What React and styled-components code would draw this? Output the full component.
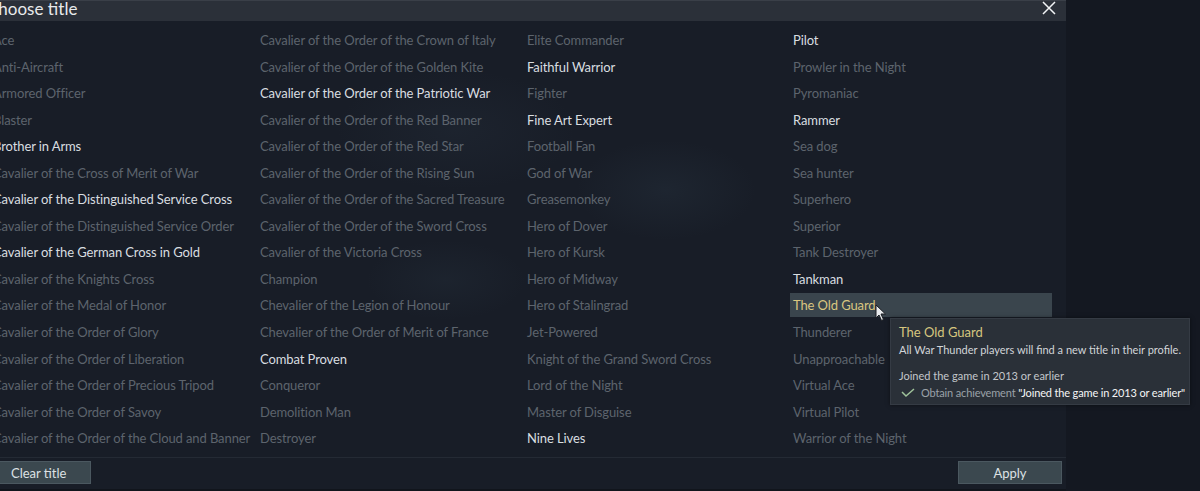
import React from 'react';
import styled, { createGlobalStyle } from 'styled-components';

const GlobalStyle = createGlobalStyle`
  html, body {
    margin: 0;
    padding: 0;
    background: #11151c;
    overflow: hidden;
  }
  body {
    font-family: Lato, "Noto Sans", sans-serif;
  }
`;

const Screen = styled.div`
  position: relative;
  width: 1200px;
  height: 491px;
  overflow: hidden;
  background: #11151c;
  background-image: linear-gradient(90deg, transparent 1066px, #141821 1066px);
`;

const Dialog = styled.div`
  margin-left: -14px;
  width: 1080px;
  height: 489px;
  display: flex;
  flex-direction: column;
  background: #181d27;
  background-image:
    radial-gradient(ellipse 120px 60px at 470px 130px, rgba(70, 90, 110, 0.10), transparent),
    radial-gradient(ellipse 90px 50px at 680px 190px, rgba(80, 110, 130, 0.10), transparent),
    radial-gradient(ellipse 80px 40px at 460px 280px, rgba(80, 110, 130, 0.08), transparent);
`;

const Header = styled.div`
  height: 21px;
  flex: none;
  display: flex;
  align-items: center;
  justify-content: space-between;
  padding: 0 10px 0 0;
  background: #2b3039;
  border-top: 1px solid #3a3f48;
  box-sizing: border-box;
`;

const Title = styled.div`
  font-size: 17px;
  color: #e8eaec;
  line-height: 1;
  margin: -6px 0 0 1px;
`;

const Close = styled.svg`
  width: 14px;
  height: 14px;
  margin-top: -6px;
`;

const List = styled.div`
  flex: 1;
  display: grid;
  grid-auto-flow: column;
  grid-template-rows: repeat(16, 24px);
  grid-template-columns: 267px 267px 266px 266px;
  row-gap: 2.55px;
  padding: 7px 0 0 4px;
`;

const Item = styled.div`
  width: 262px;
  height: 24px;
  box-sizing: border-box;
  padding-left: 3px;
  display: flex;
  align-items: center;
  font-size: 13px;
  letter-spacing: -0.1px;
  white-space: nowrap;
  color: ${p => (p.$selected ? '#d9c680' : p.$bright ? '#d9dde0' : '#5d646d')};
  background: ${p => (p.$selected ? '#3a454d' : 'transparent')};
`;

const Footer = styled.div`
  height: 31px;
  flex: none;
  display: flex;
  align-items: flex-start;
  justify-content: space-between;
  padding: 3px 4px 0 12px;
  border-top: 1px solid #242a34;
  box-sizing: border-box;
  margin-bottom: 1px;
`;

const Button = styled.div`
  height: 23px;
  width: ${p => p.$w}px;
  box-sizing: border-box;
  display: flex;
  align-items: center;
  justify-content: ${p => (p.$center ? 'center' : 'flex-start')};
  padding-left: ${p => (p.$center ? 0 : 12)}px;
  background: #3b484f;
  border: 1px solid #4b5860;
  color: #dde1e4;
  font-size: 13px;
`;

const Tooltip = styled.div`
  position: absolute;
  left: 890px;
  top: 318px;
  width: 300px;
  height: 87px;
  box-sizing: border-box;
  padding: 5px 8px;
  background: #2a3038;
  border: 1px solid #353b44;
  box-shadow: 0 0 4px rgba(0, 0, 0, 0.5);
`;

const TipTitle = styled.div`
  font-size: 13px;
  color: #d6c67f;
  line-height: 16px;
`;

const TipText = styled.div`
  font-size: 11px;
  line-height: 13px;
  white-space: nowrap;
  letter-spacing: ${p => (p.$tight ? '-0.15px' : 'normal')};
  color: ${p => p.$color || '#d2d5d8'};
  margin-top: ${p => p.$mt || 0}px;
  display: flex;
  align-items: center;
  gap: 6px;
`;

const Check = styled.svg`
  flex: none;
  margin-left: 2px;
`;

const Dim = styled.span`
  color: #9aa1a8;
`;

const Strong = styled.span`
  color: #f4f5f6;
`;

const Cursor = styled.svg`
  position: absolute;
  left: 875px;
  top: 304px;
`;

const columns = [
  [
    ['Ace'], ['Anti-Aircraft'], ['Armored Officer'], ['Blaster'], ['Brother in Arms', 1],
    ['Cavalier of the Cross of Merit of War'], ['Cavalier of the Distinguished Service Cross', 1],
    ['Cavalier of the Distinguished Service Order'], ['Cavalier of the German Cross in Gold', 1],
    ['Cavalier of the Knights Cross'], ['Cavalier of the Medal of Honor'], ['Cavalier of the Order of Glory'],
    ['Cavalier of the Order of Liberation'], ['Cavalier of the Order of Precious Tripod'],
    ['Cavalier of the Order of Savoy'], ['Cavalier of the Order of the Cloud and Banner'],
  ],
  [
    ['Cavalier of the Order of the Crown of Italy'], ['Cavalier of the Order of the Golden Kite'],
    ['Cavalier of the Order of the Patriotic War', 1], ['Cavalier of the Order of the Red Banner'],
    ['Cavalier of the Order of the Red Star'], ['Cavalier of the Order of the Rising Sun'],
    ['Cavalier of the Order of the Sacred Treasure'], ['Cavalier of the Order of the Sword Cross'],
    ['Cavalier of the Victoria Cross'], ['Champion'], ['Chevalier of the Legion of Honour'],
    ['Chevalier of the Order of Merit of France'], ['Combat Proven', 1], ['Conqueror'],
    ['Demolition Man'], ['Destroyer'],
  ],
  [
    ['Elite Commander'], ['Faithful Warrior', 1], ['Fighter'], ['Fine Art Expert', 1], ['Football Fan'],
    ['God of War'], ['Greasemonkey'], ['Hero of Dover'], ['Hero of Kursk'], ['Hero of Midway'],
    ['Hero of Stalingrad'], ['Jet-Powered'], ['Knight of the Grand Sword Cross'], ['Lord of the Night'],
    ['Master of Disguise'], ['Nine Lives', 1],
  ],
  [
    ['Pilot', 1], ['Prowler in the Night'], ['Pyromaniac'], ['Rammer', 1], ['Sea dog'], ['Sea hunter'],
    ['Superhero'], ['Superior'], ['Tank Destroyer'], ['Tankman', 1], ['The Old Guard', 0, 1],
    ['Thunderer'], ['Unapproachable'], ['Virtual Ace'], ['Virtual Pilot'], ['Warrior of the Night'],
  ],
];

export default function App() {
  return (
    <Screen>
      <GlobalStyle />
      <Dialog>
        <Header>
          <Title>Choose title</Title>
          <Close viewBox="0 0 14 14">
            <path d="M1 1 L13 13 M13 1 L1 13" stroke="#f2f4f6" strokeWidth="1.5" fill="none" />
          </Close>
        </Header>
        <List>
          {columns.flat().map(([name, bright, selected]) => (
            <Item key={name} $bright={bright} $selected={selected}>{name}</Item>
          ))}
        </List>
        <Footer>
          <Button $w={93}>Clear title</Button>
          <Button $w={104} $center>Apply</Button>
        </Footer>
      </Dialog>
      <Tooltip>
        <TipTitle>The Old Guard</TipTitle>
        <TipText $mt={3}>All War Thunder players will find a new title in their profile.</TipText>
        <TipText $mt={13} $color="#c3c7cb">Joined the game in 2013 or earlier</TipText>
        <TipText $mt={4} $tight>
          <Check width="14" height="10" viewBox="0 0 14 10">
            <path d="M1 4 L5 8 L13 1" stroke="#9fc29a" strokeWidth="1.5" fill="none" />
          </Check>
          <span>
            <Dim>Obtain achievement </Dim>
            <Strong>"Joined the game in 2013 or earlier"</Strong>
          </span>
        </TipText>
      </Tooltip>
      <Cursor width="12" height="18" viewBox="0 0 12 18">
        <path d="M1 1 L1 14 L4 11 L6.5 16.5 L8.5 15.5 L6 10 L10.5 10 Z" fill="#e8eaec" stroke="#1a1d22" strokeWidth="1" />
      </Cursor>
    </Screen>
  );
}
